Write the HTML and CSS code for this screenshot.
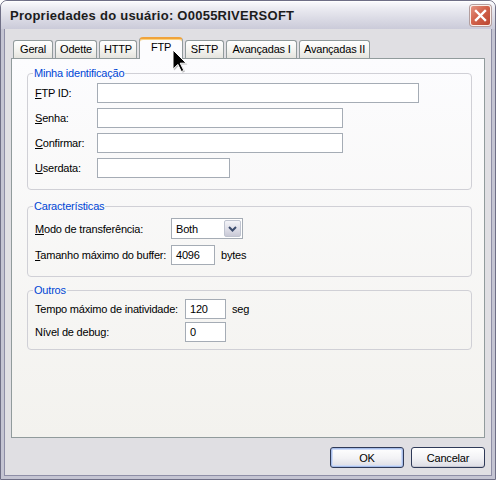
FILE: index.html
```html
<!DOCTYPE html>
<html lang="pt">
<head>
<meta charset="utf-8">
<title>Propriedades do usuário</title>
<link rel="stylesheet" href="styles.css">
</head>
<body>
<div class="window">
  <div class="titlebar">
    <span class="title">Propriedades do usuário: O0055RIVERSOFT</span>
    <span class="close">
      <svg width="13" height="13" viewBox="0 0 13 13"><path d="M2 2 L11 11 M11 2 L2 11" stroke="#fff" stroke-width="2.4" stroke-linecap="square"/></svg>
    </span>
  </div>
  <div class="client">
    <div class="tabs">
      <div class="tab t-geral">Geral</div>
      <div class="tab t-odette">Odette</div>
      <div class="tab t-http">HTTP</div>
      <div class="tab t-ftp active">FTP</div>
      <div class="tab t-sftp">SFTP</div>
      <div class="tab t-adv">Avançadas I</div>
      <div class="tab t-adv">Avançadas II</div>
    </div>
    <div class="panel">
      <fieldset class="group g1">
        <legend>Minha identificação</legend>
        <div class="fields f1">
          <label><u>F</u>TP ID:</label><span class="input w-322"></span>
          <label><u>S</u>enha:</label><span class="input w-246"></span>
          <label><u>C</u>onfirmar:</label><span class="input w-246"></span>
          <label><u>U</u>serdata:</label><span class="input w-133"></span>
        </div>
      </fieldset>
      <fieldset class="group g2">
        <legend>Características</legend>
        <div class="fields f2">
          <label><u>M</u>odo de transferência:</label>
          <span class="select"><span class="select-text">Both</span><span class="select-btn"><svg width="9" height="6" viewBox="0 0 9 6"><path d="M1 1 L4.5 4.5 L8 1" fill="none" stroke="#3d4d6e" stroke-width="2"/></svg></span></span>
          <label><u>T</u>amanho máximo do buffer:</label>
          <span class="inline"><span class="input w-44">4096</span><span class="unit">bytes</span></span>
        </div>
      </fieldset>
      <fieldset class="group g3">
        <legend>Outros</legend>
        <div class="fields f3">
          <label>Tempo máximo de inatividade:</label>
          <span class="inline"><span class="input w-41">120</span><span class="unit">seg</span></span>
          <label>Nível de debug:</label>
          <span class="inline"><span class="input w-41">0</span></span>
        </div>
      </fieldset>
    </div>
    <div class="buttons">
      <button class="btn default">OK</button>
      <button class="btn">Cancelar</button>
    </div>
  </div>
  <svg class="cursor" width="16" height="26" viewBox="0 0 16 26">
    <path d="M2.2 2.2 V21.4 L7 16.6 L10.6 23.8 L13 22.6 L9.4 15.4 H15.4 Z" fill="#000" opacity="0.25"/>
    <path d="M1 1 V20.2 L5.8 15.4 L9.4 22.6 L11.8 21.4 L8.2 14.2 H14.2 Z" fill="#000" stroke="#fff" stroke-width="1"/>
  </svg>
</div>
</body>
</html>
```
FILE: styles.css
```css
* { box-sizing: border-box; }
html, body { margin: 0; padding: 0; }
body {
  width: 496px;
  height: 480px;
  overflow: hidden;
  background: #fff;
  font-family: "Liberation Sans", Arial, sans-serif;
  font-size: 11px;
  letter-spacing: -0.2px;
  color: #000;
}
.window {
  position: relative;
  width: 496px;
  height: 480px;
  border: 1px solid #6f6f86;
  border-radius: 7px 7px 0 0;
  background: #e0dfe3;
  display: flex;
  flex-direction: column;
  overflow: hidden;
}
.titlebar {
  flex: none;
  height: 28px;
  display: flex;
  align-items: center;
  justify-content: space-between;
  padding: 0 4px 0 9px;
  border-radius: 6px 6px 0 0;
  background: linear-gradient(#fcfcfe 0%, #ececf2 25%, #dcdce6 60%, #cbcbd9 100%);
  box-shadow: inset 0 1px #ffffff;
}
.title {
  font-weight: bold;
  font-size: 13px;
  color: #1c1c1c;
  letter-spacing: 0.25px;
}
.close {
  width: 21px;
  height: 21px;
  border: 1px solid #fbefe9;
  border-radius: 3px;
  background: linear-gradient(135deg, #e39584 0%, #d2624a 45%, #bb4630 100%);
  box-shadow: 0 0 0 1px #b39e9e;
  display: flex;
  align-items: center;
  justify-content: center;
}
.client {
  flex: 1;
  display: flex;
  flex-direction: column;
  border: 3px solid #c4c4d2;
  border-top: 0;
  box-shadow: inset 1px 0 #8e8ea6, inset -1px 0 #8e8ea6, inset 0 -1px #8e8ea6;
  padding: 8px 7px 0 7px;
}
.tabs {
  flex: none;
  height: 21px;
  display: flex;
  align-items: flex-end;
  gap: 2px;
  padding-left: 2px;
}
.tab {
  height: 18px;
  padding: 0;
  text-align: center;
  border: 1px solid #919b9c;
  border-bottom: 0;
  border-radius: 3px 3px 0 0;
  background: linear-gradient(#ffffff, #f3f3ef 55%, #e5e4de);
  line-height: 17px;
  white-space: nowrap;
}
.t-geral { width: 40px; }
.t-odette { width: 42px; }
.t-http { width: 38px; }
.t-ftp { width: 44px; }
.t-sftp { width: 39px; }
.t-adv { width: 71px; }
.tab.active {
  position: relative;
  z-index: 2;
  height: 22px;
  margin-bottom: -1px;
  border-top: 2px solid #f0a33b;
  border-radius: 4px 4px 0 0;
  background: #fcfcfe;
  box-shadow: inset 0 1px #fcd37e;
  line-height: 17px;
}
.panel {
  flex: none;
  height: 380px;
  border: 1px solid #919b9c;
  background: linear-gradient(#fcfcfe, #f3f2ee);
  padding: 8px 12px 0 15px;
}
.group {
  margin: 0;
  min-width: 0;
  border: 1px solid #d0d0d6;
  border-radius: 4px;
  padding: 3px 7px 11px 7px;
}
.group legend {
  color: #0046d5;
  padding: 0 1px;
  margin-left: -2px;
  line-height: 13px;
}
.g2 { margin-top: 10px; padding-top: 5px; padding-bottom: 11px; }
.g3 { margin-top: 7px; padding-top: 2px; padding-bottom: 7px; }
.fields {
  display: grid;
  align-items: center;
  justify-items: start;
}
.f1 { grid-template-columns: 62px auto; row-gap: 5px; }
.f2 { grid-template-columns: 136px auto; row-gap: 6px; }
.f3 { grid-template-columns: 150px auto; row-gap: 3px; }
label { white-space: nowrap; }
.input {
  display: block;
  height: 20px;
  border: 1px solid #a5acb5;
  background: #fff;
  padding: 0 4px;
  line-height: 18px;
}
.w-322 { width: 322px; }
.w-246 { width: 246px; }
.w-133 { width: 133px; }
.w-44 { width: 44px; }
.w-41 { width: 41px; }
.inline { display: flex; align-items: center; }
.unit { margin-left: 6px; }
.select {
  display: flex;
  align-items: center;
  width: 72px;
  height: 21px;
  border: 1px solid #a5acb5;
  background: #fff;
  padding: 1px;
}
.select-text { flex: 1; padding-left: 3px; }
.select-btn {
  width: 17px;
  height: 17px;
  border: 1px solid #c0c4d0;
  border-radius: 2px;
  background: linear-gradient(#f4f4f8, #dcdce6 60%, #c9c9d6);
  display: flex;
  align-items: center;
  justify-content: center;
}
.buttons {
  flex: none;
  display: flex;
  justify-content: flex-end;
  gap: 7px;
  margin-top: 9px;
}
.btn {
  width: 74px;
  height: 21px;
  padding: 0;
  border: 1px solid #2f3a58;
  border-radius: 3px;
  background: linear-gradient(#ffffff, #f2f2f5 55%, #dcdce4);
  font-family: "Liberation Sans", Arial, sans-serif;
  font-size: 11px;
  letter-spacing: -0.2px;
  color: #000;
  box-shadow: inset 0 -1px #c9c9d3;
}
.btn.default {
  box-shadow: inset 0 0 0 1px #a7bdea, inset 0 0 0 2px #cfdcf7;
}
.cursor {
  position: absolute;
  left: 171px;
  top: 48px;
  z-index: 5;
}
```
